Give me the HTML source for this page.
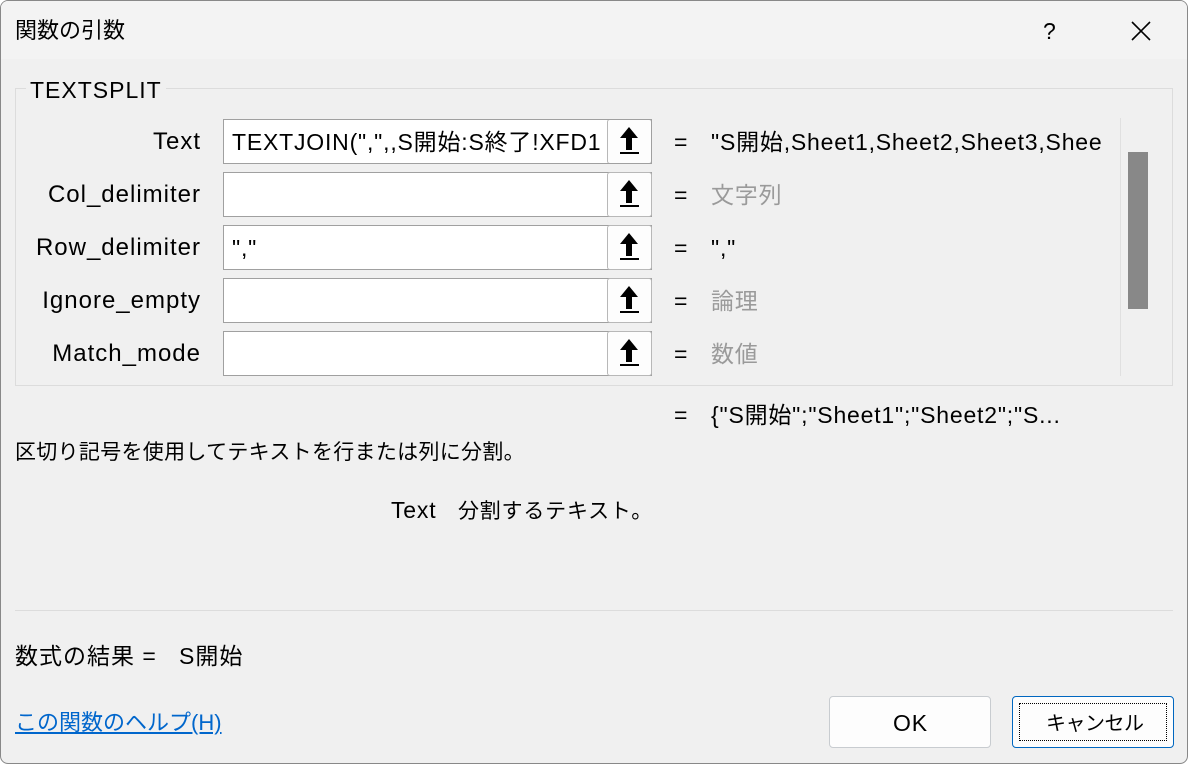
<!DOCTYPE html>
<html><head><meta charset="utf-8"><style>
*{margin:0;padding:0;box-sizing:border-box}
body{width:1190px;height:766px;background:#fff;font-family:"Liberation Sans","Noto Sans CJK JP",sans-serif;color:#000;overflow:hidden;position:relative}
.win{position:absolute;left:0;top:0;width:1188px;height:764px;background:#f0f0f0;border:1px solid #888;border-radius:8px;overflow:hidden}
.title{position:absolute;left:0;top:0;width:100%;height:58px;background:#f3f3f3}
.t{position:absolute;white-space:nowrap;font-size:23px;line-height:26px;letter-spacing:0.8px}
.grp{position:absolute;left:14px;top:87px;width:1158px;height:298px;border:1px solid #dcdcdc}
.inp{position:absolute;left:222px;width:429px;height:45px;background:#fff;border:1px solid #a0a0a0}
.btn{position:absolute;right:-1px;top:-1px;width:45px;height:45px;background:#fdfdfd;border:1px solid #b8b8b8;border-radius:3px}
.lbl{position:absolute;right:986px;white-space:nowrap;font-size:24px;letter-spacing:1px}
.gray{color:#9a9a9a}
</style></head><body><div class="win">
<div class="title"></div>
<div class="t" style="left:14px;top:17px;font-size:22px;letter-spacing:0">関数の引数</div>
<div class="t" style="left:1042px;top:17px">?</div>
<svg style="position:absolute;left:1129px;top:19px" width="22" height="22"><path d="M2 2L20 20M20 2L2 20" stroke="#000" stroke-width="1.6"/></svg>
<div class="grp"></div>
<div class="t" style="left:25px;top:76px;background:#f0f0f0;padding:0 4px;font-size:23px;letter-spacing:1px">TEXTSPLIT</div>
<div style="position:absolute;left:1119px;top:117px;width:1px;height:258px;background:#e0e0e0"></div>
<div style="position:absolute;left:1127px;top:151px;width:20px;height:157px;background:#888"></div>

<div class="lbl" style="top:127px">Text</div>
<div class="lbl" style="top:180px">Col_delimiter</div>
<div class="lbl" style="top:233px">Row_delimiter</div>
<div class="lbl" style="top:286px">Ignore_empty</div>
<div class="lbl" style="top:339px">Match_mode</div>

<div class="inp" style="top:118px;overflow:hidden"><div class="t" style="left:8px;top:9px">TEXTJOIN(",",,S開始:S終了!XFD1</div><div class="btn"></div></div>
<div class="inp" style="top:171px"><div class="btn"></div></div>
<div class="inp" style="top:224px"><div class="t" style="left:8px;top:9px">","</div><div class="btn"></div></div>
<div class="inp" style="top:277px"><div class="btn"></div></div>
<div class="inp" style="top:330px"><div class="btn"></div></div>

<svg style="position:absolute;left:0;top:0" width="1190" height="766">
<g fill="#000">
<path d="M628 126l-9 11h6v12h6v-12h6z"/><rect x="619" y="151" width="19" height="2"/>
<path d="M628 179l-9 11h6v12h6v-12h6z"/><rect x="619" y="204" width="19" height="2"/>
<path d="M628 232l-9 11h6v12h6v-12h6z"/><rect x="619" y="257" width="19" height="2"/>
<path d="M628 285l-9 11h6v12h6v-12h6z"/><rect x="619" y="310" width="19" height="2"/>
<path d="M628 338l-9 11h6v12h6v-12h6z"/><rect x="619" y="363" width="19" height="2"/></g></svg>

<div class="t" style="left:673px;top:128px">=</div>
<div class="t" style="left:673px;top:181px">=</div>
<div class="t" style="left:673px;top:234px">=</div>
<div class="t" style="left:673px;top:287px">=</div>
<div class="t" style="left:673px;top:340px">=</div>
<div class="t" style="left:710px;top:128px;width:390px;overflow:hidden">"S開始,Sheet1,Sheet2,Sheet3,Sheet4</div>
<div class="t gray" style="left:710px;top:181px">文字列</div>
<div class="t" style="left:710px;top:234px">","</div>
<div class="t gray" style="left:710px;top:287px">論理</div>
<div class="t gray" style="left:710px;top:340px">数値</div>

<div class="t" style="left:673px;top:401px">=</div>
<div class="t" style="left:710px;top:401px">{"S開始";"Sheet1";"Sheet2";"S...</div>
<div class="t" style="left:14px;top:439px;font-size:21px;letter-spacing:0.3px">区切り記号を使用してテキストを行または列に分割。</div>
<div class="t" style="left:390px;top:496px">Text&nbsp;&nbsp; <span style="font-size:21px">分割するテキスト。</span></div>
<div style="position:absolute;left:14px;top:609px;width:1158px;height:1px;background:#dcdcdc"></div>
<div class="t" style="left:14px;top:642px;letter-spacing:1px">数式の結果 =&nbsp;&nbsp; S開始</div>
<div class="t" style="left:14px;top:709px;color:#0066cc;text-decoration:underline;font-size:22px;letter-spacing:0">この関数のヘルプ(H)</div>
<div style="position:absolute;left:828px;top:695px;width:162px;height:52px;background:#fdfdfd;border:1px solid #c8ccd0;border-radius:4px"></div>
<div class="t" style="left:892px;top:709px">OK</div>
<div style="position:absolute;left:1011px;top:695px;width:162px;height:52px;background:#fdfdfd;border:1px solid #0067c0;border-radius:4px"><div style="position:absolute;left:6px;top:6px;right:6px;bottom:6px;border:1px dotted #000"></div></div>
<div class="t" style="left:1045px;top:710px;font-size:20px;letter-spacing:-0.5px">キャンセル</div>
</div></body></html>
